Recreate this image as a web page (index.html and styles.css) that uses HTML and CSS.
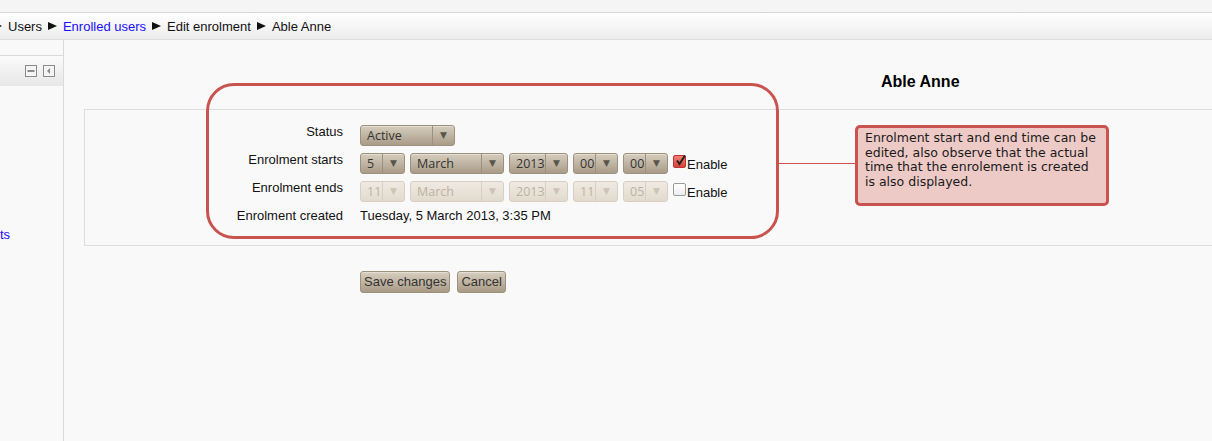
FILE: index.html
```html
<!DOCTYPE html>
<html>
<head>
<meta charset="utf-8">
<link rel="stylesheet" href="styles.css">
</head>
<body>
<div class="page">
  <div class="topstrip"></div>
  <div class="navbar">
    <ul class="crumbs">
      <li><span class="sep"></span>Users</li>
      <li><span class="sep"></span><a href="#">Enrolled users</a></li>
      <li><span class="sep"></span>Edit enrolment</li>
      <li><span class="sep"></span>Able Anne</li>
    </ul>
  </div>
  <div class="layout">
    <aside class="side">
      <div class="block">
        <div class="block-head">
          <svg class="bicon" width="12" height="12" viewBox="0 0 12 12"><rect x="0.5" y="0.5" width="11" height="11" fill="#f4f4f4" stroke="#8a8a8a"/><rect x="2.5" y="5" width="7" height="2" fill="#8a8a8a"/></svg>
          <svg class="bicon" width="12" height="12" viewBox="0 0 12 12"><rect x="0.5" y="0.5" width="11" height="11" fill="#f4f4f4" stroke="#8a8a8a"/><path d="M7 3 L4 6 L7 9 Z" fill="#8a8a8a"/></svg>
        </div>
        <div class="block-body">
          <a class="cut-link" href="#">ts</a>
        </div>
      </div>
    </aside>
    <main class="main">
      <h2 class="heading">Able Anne</h2>
      <form class="form">
        <fieldset class="fs">
          <div class="row">
            <div class="lbl">Status</div>
            <div class="ctl">
              <div class="sel w-status"><span class="val">Active</span><span class="arr">▼</span></div>
            </div>
          </div>
          <div class="row">
            <div class="lbl">Enrolment starts</div>
            <div class="ctl">
              <div class="sel w-day"><span class="val">5</span><span class="arr">▼</span></div>
              <div class="sel w-month"><span class="val">March</span><span class="arr">▼</span></div>
              <div class="sel w-year"><span class="val">2013</span><span class="arr">▼</span></div>
              <div class="sel w-hm"><span class="val">00</span><span class="arr">▼</span></div>
              <div class="sel w-hm"><span class="val">00</span><span class="arr">▼</span></div>
              <label class="chk"><span class="box on"><svg width="13" height="13" viewBox="0 0 13 13"><path d="M3 6.5 L5.5 10 L11 1.5" fill="none" stroke="#222" stroke-width="2"/></svg></span>Enable</label>
            </div>
          </div>
          <div class="row">
            <div class="lbl">Enrolment ends</div>
            <div class="ctl">
              <div class="sel dis w-day"><span class="val">11</span><span class="arr">▼</span></div>
              <div class="sel dis w-month"><span class="val">March</span><span class="arr">▼</span></div>
              <div class="sel dis w-year"><span class="val">2013</span><span class="arr">▼</span></div>
              <div class="sel dis w-hm"><span class="val">11</span><span class="arr">▼</span></div>
              <div class="sel dis w-hm"><span class="val">05</span><span class="arr">▼</span></div>
              <label class="chk"><span class="box"></span>Enable</label>
            </div>
          </div>
          <div class="row">
            <div class="lbl">Enrolment created</div>
            <div class="ctl static">Tuesday, 5 March 2013, 3:35 PM</div>
          </div>
        </fieldset>
        <div class="buttons">
          <button type="button" class="btn">Save changes</button>
          <button type="button" class="btn">Cancel</button>
        </div>
      </form>
    </main>
  </div>

  <div class="anno-ring"></div>
  <div class="anno-line"></div>
  <div class="anno-note">Enrolment start and end time can be edited, also observe that the actual time that the enrolement is created is also displayed.</div>
</div>
</body>
</html>
```

FILE: styles.css
```css
html, body {
  margin: 0;
  padding: 0;
  height: 100%;
  overflow: hidden;
}
body {
  background: #f9f9f9;
  font-family: "Liberation Sans", Arial, sans-serif;
  font-size: 13px;
  color: #111;
}
.page {
  position: relative;
  width: 1212px;
  height: 441px;
  overflow: hidden;
  display: flex;
  flex-direction: column;
}
.topstrip {
  height: 12px;
  background: #f5f5f5;
  border-bottom: 1px solid #d9d9d9;
}
.navbar {
  height: 26px;
  background: linear-gradient(#ffffff, #ececec);
  border-bottom: 1px solid #dcdcdc;
  display: flex;
  align-items: center;
}
.crumbs {
  list-style: none;
  margin: 0 0 0 -7px;
  padding: 0;
  display: flex;
  gap: 6px;
  font-size: 13px;
  color: #111;
}
.crumbs li { white-space: nowrap; display: flex; align-items: center; }
.crumbs .sep {
  display: inline-block;
  width: 0;
  height: 0;
  border-left: 9px solid #111;
  border-top: 4.5px solid transparent;
  border-bottom: 4.5px solid transparent;
  margin-right: 6px;
}
.crumbs a { color: #1a0dff; text-decoration: none; }

.layout {
  flex: 1;
  display: flex;
}
.side {
  width: 63px;
  border-right: 1px solid #dadada;
  padding-top: 15px;
  flex: none;
}
.block-head {
  border-top: 1px solid #dadada;
  background: linear-gradient(#fbfbfb, #e7e7e7);
  display: flex;
  justify-content: flex-end;
  align-items: flex-start;
  gap: 6px;
  padding: 9px 8px 0 0;
  box-sizing: border-box;
  height: 31px;
}
.bicon { display: block; }
.block-body {
  padding-top: 141px;
}
.cut-link {
  display: block;
  margin-left: 0;
  color: #1a0dff;
  text-decoration: none;
  font-size: 13px;
  line-height: 16px;
}

.main {
  flex: 1;
  position: relative;
}
.heading {
  margin: 0;
  padding: 32px 0 0 817px;
  font-size: 16px;
  font-weight: bold;
  line-height: 20px;
  color: #000;
  white-space: nowrap;
}
.form { margin: 0; }
.fs {
  margin: 17px 0 0 20px;
  width: 1200px;
  border: 1px solid #dddddd;
  padding: 15px 0 15px 0;
  box-sizing: border-box;
  height: 137px;
}
.row {
  display: flex;
  align-items: flex-start;
  height: 21px;
  margin-bottom: 7px;
}
.lbl {
  width: 258px;
  text-align: right;
  flex: none;
  color: #111;
  line-height: 14px;
}
.ctl {
  margin-left: 17px;
  display: flex;
  align-items: center;
  gap: 5px;
}
.ctl.static { color: #111; line-height: 14px; }

.sel {
  box-sizing: border-box;
  height: 21px;
  display: flex;
  border: 1px solid #9d907c;
  border-radius: 3px;
  background: linear-gradient(#d6cdbe, #a99c88);
  font-family: "Open Sans", "Liberation Sans", sans-serif;
  font-size: 12.5px;
  color: #333;
  box-shadow: inset 0 1px 0 rgba(255,255,255,0.35);
}
.sel .val {
  flex: 1;
  padding-left: 6px;
  line-height: 19px;
  white-space: nowrap;
  overflow: hidden;
}
.sel .arr {
  width: 21px;
  flex: none;
  border-left: 1px solid #9d907c;
  text-align: center;
  font-size: 9px;
  line-height: 19px;
  color: #5a5449;
  font-family: "DejaVu Sans", sans-serif;
}
.sel.dis {
  border-color: #d8cfc2;
  background: linear-gradient(#efeae2, #e2dacd);
  color: #bcb2a3;
  box-shadow: none;
}
.sel.dis .arr { border-left-color: #d8cfc2; color: #cdc4b6; }
.w-status { width: 95px; }
.w-day { width: 45px; }
.w-month { width: 94px; }
.w-year { width: 59px; }
.w-hm { width: 45px; }
.w-hm + .w-hm { width: 45px; }

.chk {
  display: flex;
  align-items: center;
  margin-left: 0;
  color: #111;
  padding-top: 1px;
}
.chk .box {
  width: 11px;
  height: 11px;
  border: 1px solid #9a9a9a;
  border-radius: 2px;
  background: linear-gradient(#ffffff, #eeeeee);
  position: relative;
  margin-right: 1px;
  margin-top: -5px;
}
.chk .box.on {
  background: linear-gradient(#f08070, #d9423a);
  border-color: #b33;
}
.chk .box svg { position: absolute; left: 0; top: -2px; }

.buttons {
  margin: 25px 0 0 296px;
  display: flex;
  gap: 7px;
}
.btn {
  box-sizing: border-box;
  height: 22px;
  padding: 0 3px;
  border: 1px solid #9d907c;
  border-radius: 3px;
  background: linear-gradient(#d8cebf, #a89a86);
  font-family: "Liberation Sans", Arial, sans-serif;
  font-size: 13px;
  color: #333;
  line-height: 20px;
  box-shadow: inset 0 1px 0 rgba(255,255,255,0.35);
}

.anno-ring {
  position: absolute;
  left: 206px;
  top: 83px;
  width: 573px;
  height: 156px;
  box-sizing: border-box;
  border: 3px solid #c9534f;
  border-radius: 28px;
  pointer-events: none;
}
.anno-line {
  position: absolute;
  left: 779px;
  top: 163px;
  width: 77px;
  height: 1px;
  background: #d0504c;
}
.anno-note {
  position: absolute;
  left: 855px;
  top: 125px;
  width: 254px;
  height: 81px;
  box-sizing: border-box;
  border: 3px solid #c9534f;
  border-radius: 5px;
  background: #eecac7;
  padding: 3px 4px 0 7px;
  font-family: "DejaVu Sans", sans-serif;
  font-size: 12.5px;
  line-height: 14.5px;
  color: #1a1a1a;
}
```
